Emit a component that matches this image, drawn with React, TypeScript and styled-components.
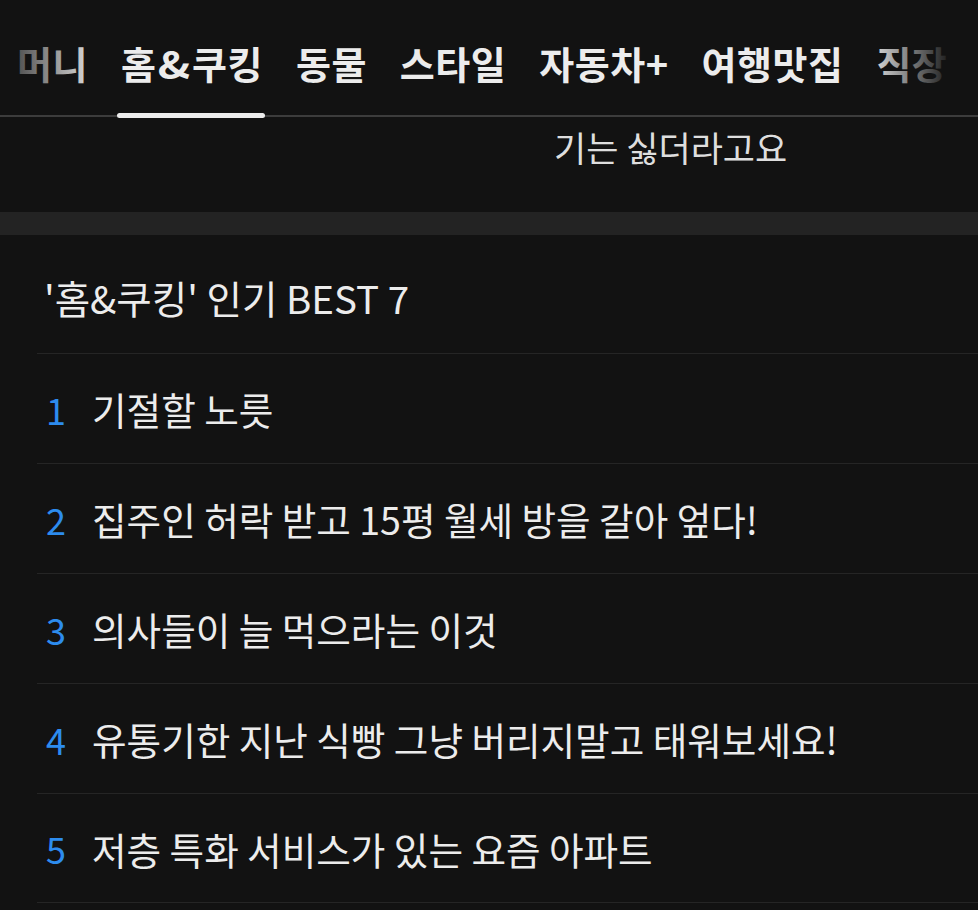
import React from "react";
import styled, {createGlobalStyle} from "styled-components";

const GlobalStyle = createGlobalStyle`
  html, body {
    margin: 0;
    padding: 0;
    background: #121212;
  }
  body {
    font-family: "Noto Sans CJK KR", "Noto Sans", sans-serif;
    color: #e9e9e9;
    overflow: hidden;
  }
  * {
    box-sizing: border-box;
  }
`

const tabs = ["머니", "홈&쿠킹", "동물", "스타일", "자동차+", "여행맛집", "직장"]

const best = [
    "기절할 노릇",
    "집주인 허락 받고 15평 월세 방을 갈아 엎다!",
    "의사들이 늘 먹으라는 이것",
    "유통기한 지난 식빵 그냥 버리지말고 태워보세요!",
    "저층 특화 서비스가 있는 요즘 아파트",
]

// the "&" in the tab font is wider than the CJK one
function TabLabel({text}: {text: string}) {
    const parts = text.split("&")
    if (parts.length === 1) return <>{text}</>
    return <>{parts[0]}<Amp>&amp;</Amp>{parts[1]}</>
}

export default function App() {
    return (
        <Page>
            <GlobalStyle/>
            <Nav>
                <TabRow>
                    {tabs.map(t => (
                        <Tab key={t} active={t === "홈&쿠킹"}><TabLabel text={t}/></Tab>
                    ))}
                </TabRow>
                <Fade side="left"/>
                <Fade side="right"/>
            </Nav>
            <Snippet>
                <SnippetText>기는 싫더라고요</SnippetText>
            </Snippet>
            <Band/>
            <Section>
                <Title>'홈&쿠킹' 인기 BEST 7</Title>
                <List>
                    {best.map((item, i) => (
                        <Row key={item}>
                            <Rank>{i + 1}</Rank>
                            <RowText>{item}</RowText>
                        </Row>
                    ))}
                </List>
            </Section>
        </Page>
    )
}

const Page = styled.div`
  width: 978px;
  min-height: 910px;
  background: #121212;
`

const Nav = styled.nav`
  position: relative;
  height: 118px;
`

const TabRow = styled.div`
  display: flex;
  height: 100%;
  gap: 33px;
  padding: 0 0 0 17px;
  overflow: hidden;
  white-space: nowrap;
  background: linear-gradient(#3c3c3c, #3c3c3c) left 0 bottom 1px / 100% 2px no-repeat;
`

const Tab = styled.div<{active?: boolean}>`
  position: relative;
  display: flex;
  align-items: center;
  padding-top: 6px;
  flex-shrink: 0;
  font-size: 38px;
  font-weight: 700;
  letter-spacing: 0.5px;
  color: #ececec;

  &::after {
    content: "";
    display: ${p => p.active ? "block" : "none"};
    position: absolute;
    left: -4px;
    right: -2px;
    bottom: 0;
    height: 5px;
    border-radius: 3px;
    background: #ececec;
  }
`

const Amp = styled.span`
  margin: 0 3px 0 4px;
  transform: scaleX(1.15);
  display: inline-block;
`

const Fade = styled.div<{side: "left" | "right"}>`
  position: absolute;
  top: 0;
  bottom: 4px;
  width: ${p => p.side === "left" ? "100px" : "112px"};
  pointer-events: none;
  ${p => p.side === "left"
    ? "left: 0; background: linear-gradient(to right, rgba(18,18,18,0.85), rgba(18,18,18,0));"
    : "right: 0; background: linear-gradient(to left, #121212 22%, rgba(18,18,18,0));"}
`

const Snippet = styled.div`
  height: 94px;
  padding: 8px 0 0 554px;
`

const SnippetText = styled.p`
  margin: 0;
  font-size: 35px;
  line-height: 42px;
  color: #dedede;
`

const Band = styled.div`
  height: 23px;
  background: #232323;
`

const Section = styled.section`
  display: flex;
  flex-direction: column;
`

const Title = styled.h2`
  margin: 0;
  padding: 38px 0 32px 44px;
  font-size: 38.5px;
  line-height: 48px;
  font-weight: 400;
  color: #ececec;
`

const List = styled.ol`
  list-style: none;
  margin: 0 0 0 37px;
  padding: 0;
`

const Row = styled.li`
  display: flex;
  align-items: center;
  height: 110px;
  border-top: 1px solid #252525;

  &:last-child {
    border-bottom: 1px solid #252525;
  }
`

const Rank = styled.span`
  width: 55px;
  padding-left: 9px;
  font-size: 36px;
  color: #2d8cee;
`

const RowText = styled.span`
  font-size: 37.6px;
  color: #ececec;
`
